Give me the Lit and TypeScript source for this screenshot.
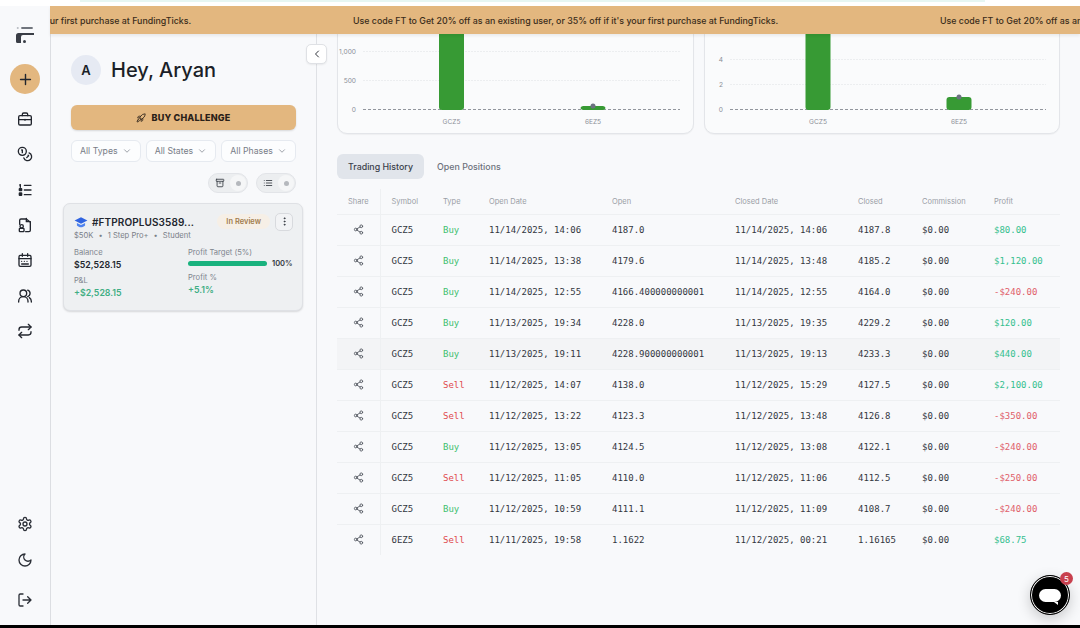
import { LitElement, html, css, svg } from "lit";
import { customElement } from "lit/decorators.js";

type Row = [string, string, string, string, string, string, string];
const rows: Row[] = [
  ["GCZ5","Buy","11/14/2025, 14:06","4187.0","11/14/2025, 14:06","4187.8","$80.00"],
  ["GCZ5","Buy","11/14/2025, 13:38","4179.6","11/14/2025, 13:48","4185.2","$1,120.00"],
  ["GCZ5","Buy","11/14/2025, 12:55","4166.400000000001","11/14/2025, 12:55","4164.0","-$240.00"],
  ["GCZ5","Buy","11/13/2025, 19:34","4228.0","11/13/2025, 19:35","4229.2","$120.00"],
  ["GCZ5","Buy","11/13/2025, 19:11","4228.900000000001","11/13/2025, 19:13","4233.3","$440.00"],
  ["GCZ5","Sell","11/12/2025, 14:07","4138.0","11/12/2025, 15:29","4127.5","$2,100.00"],
  ["GCZ5","Sell","11/12/2025, 13:22","4123.3","11/12/2025, 13:48","4126.8","-$350.00"],
  ["GCZ5","Buy","11/12/2025, 13:05","4124.5","11/12/2025, 13:08","4122.1","-$240.00"],
  ["GCZ5","Sell","11/12/2025, 11:05","4110.0","11/12/2025, 11:06","4112.5","-$250.00"],
  ["GCZ5","Buy","11/12/2025, 10:59","4111.1","11/12/2025, 11:09","4108.7","-$240.00"],
  ["6EZ5","Sell","11/11/2025, 19:58","1.1622","11/12/2025, 00:21","1.16165","$68.75"],
];

const icon = (body: unknown, size = 16, sw = 2) => html`<svg width=${size} height=${size} viewBox="0 0 24 24" fill="none" stroke="currentColor" stroke-width=${sw} stroke-linecap="round" stroke-linejoin="round">${body}</svg>`;

const icons = {
  plus: svg`<path d="M5 12h14M12 5v14"/>`,
  brief: svg`<rect x="2.5" y="7" width="19" height="14" rx="2"/><path d="M8 7V5a2 2 0 0 1 2-2h4a2 2 0 0 1 2 2v2M2.5 13h19M12 12.5v1.5"/>`,
  coins: svg`<circle cx="8" cy="8" r="6"/><path d="M18.1 10.4A6 6 0 1 1 10.3 18M7 6h1v4"/><path d="m16.7 13.9.7.7-2.8 2.8"/>`,
  list: svg`<path d="M11 5h10M11 12h10M11 19h10"/><path d="M4 4.5 5 4v4" /><rect x="3.5" y="16.5" width="3.5" height="3.5" rx=".5" fill="currentColor"/><rect x="3.5" y="10" width="3.5" height="3" rx=".5" fill="currentColor"/>`,
  file: svg`<path d="M14 2v5h6"/><path d="M4 11V5a2 2 0 0 1 2-2h8l6 5v12a2 2 0 0 1-2 2h-5"/><circle cx="7" cy="14" r="2.5"/><rect x="3.5" y="17" width="7" height="5" rx="1"/>`,
  cal: svg`<rect x="3" y="5" width="18" height="16.5" rx="2"/><path d="M8 2.5v4M16 2.5v4M3 10h18M7 14h.01M11 14h.01M15 14h.01M7 18h10"/>`,
  users: svg`<circle cx="9.5" cy="8" r="5"/><path d="M2.5 21v-1a7 7 0 0 1 14 0v1M16 3.2a5 5 0 0 1 0 9.6M21.5 21v-1a7 7 0 0 0-3-5.5"/>`,
  repeat: svg`<path d="m17 2 4 4-4 4"/><path d="M3 11v-1a4 4 0 0 1 4-4h14M7 22l-4-4 4-4"/><path d="M21 13v1a4 4 0 0 1-4 4H3"/>`,
  gear: svg`<path d="M12.2 2h-.4a2 2 0 0 0-2 2v.2a2 2 0 0 1-1 1.7l-.4.3a2 2 0 0 1-2 0l-.2-.1a2 2 0 0 0-2.7.7l-.2.4a2 2 0 0 0 .7 2.7l.2.1a2 2 0 0 1 1 1.7v.5a2 2 0 0 1-1 1.8l-.2.1a2 2 0 0 0-.7 2.7l.2.4a2 2 0 0 0 2.7.7l.2-.1a2 2 0 0 1 2 0l.4.3a2 2 0 0 1 1 1.7v.2a2 2 0 0 0 2 2h.4a2 2 0 0 0 2-2v-.2a2 2 0 0 1 1-1.7l.4-.3a2 2 0 0 1 2 0l.2.1a2 2 0 0 0 2.7-.7l.2-.4a2 2 0 0 0-.7-2.7l-.2-.1a2 2 0 0 1-1-1.8v-.5a2 2 0 0 1 1-1.7l.2-.1a2 2 0 0 0 .7-2.7l-.2-.4a2 2 0 0 0-2.7-.7l-.2.1a2 2 0 0 1-2 0l-.4-.3a2 2 0 0 1-1-1.7V4a2 2 0 0 0-2-2z"/><circle cx="12" cy="12" r="3"/>`,
  moon: svg`<path d="M12 3a6 6 0 0 0 9 9 9 9 0 1 1-9-9z"/>`,
  logout: svg`<path d="M9 21H5a2 2 0 0 1-2-2V5a2 2 0 0 1 2-2h4M16 17l5-5-5-5M21 12H9"/>`,
  rocket: svg`<path d="M4.5 16.5c-1.5 1.3-2 5-2 5s3.7-.5 5-2c.7-.8.7-2.1-.1-2.900a2.2 2.2 0 0 0-2.900-.1z"/><path d="m12 15-3-3a22 22 0 0 1 2-3.900A12.900 12.900 0 0 1 22 2c0 2.700-.8 7.500-6 11a22.400 22.400 0 0 1-4 2z"/><path d="M9 12H4s.6-3 2-4c1.600-1.100 5 0 5 0M12 15v5s3-.6 4-2c1.100-1.600 0-5 0-5"/>`,
  chev: svg`<path d="m6 9 6 6 6-6"/>`,
  left: svg`<path d="m15 18-6-6 6-6"/>`,
  archive: svg`<rect x="3" y="3" width="18" height="5" rx="1"/><path d="M5 8v11a2 2 0 0 0 2 2h10a2 2 0 0 0 2-2V8M10 12h4"/>`,
  lines: svg`<path d="M8 6h13M8 12h13M8 18h13M3 6h.01M3 12h.01M3 18h.01"/>`,
  dots: svg`<circle cx="12" cy="5" r="1"/><circle cx="12" cy="12" r="1"/><circle cx="12" cy="19" r="1"/>`,
  share: svg`<circle cx="18" cy="5" r="3"/><circle cx="6" cy="12" r="3"/><circle cx="18" cy="19" r="3"/><path d="m8.600 13.500 6.800 4M15.400 6.500l-6.800 4"/>`,
};

const MSG = "Use code FT to Get 20% off as an existing user, or 35% off if it's your first purchase at FundingTicks.";

function chart(ticks: [number, string][], bars: [number, number][], w: number, ox: number) {
  // bars: [x-centre, top-y], coordinates local to the card
  const base = 90;
  return html`<svg class="plot" width=${w} height="114" viewBox="0 0 ${w} 114">
    ${ticks.map(([y, t]) => svg`
      <text x=${ox - 7} y=${y + 2.5} text-anchor="end" class="tick">${t}</text>
      <line x1=${ox} x2=${w - 13} y1=${y + 0.5} y2=${y + 0.5} stroke=${y === base ? "#92969d" : "#eceef0"} stroke-width="1" stroke-dasharray=${y === base ? "3 2" : "2 1"}/>
    `)}
    ${bars.map(([x, top], i) => svg`
      <path d="M${x - 12.5} ${base - 2}V${top + 3}a3 3 0 0 1 3-3h19a3 3 0 0 1 3 3V${base - 2}a3 3 0 0 1-3 3h-19a3 3 0 0 1-3-3z" fill="#379a34"/>
      ${i === 1 ? svg`<circle cx=${x} cy=${top} r="2.5" fill="#6b7280"/>` : null}
      <text x=${x} y="104.5" text-anchor="middle" class="tick">${i === 0 ? "GCZ5" : "6EZ5"}</text>
    `)}
  </svg>`;
}

@customElement("app-root")
export class AppRoot extends LitElement {
  static styles = css`
    :host { display: block; width: 1080px; height: 628px; overflow: hidden; position: relative; background: #f8f9fb; font-family: Inter, "Liberation Sans", sans-serif; color: #1b1f27; }
    .top { height: 6px; background: #fff; display: flex; }
    .top i { display: block; margin-left: 80px; width: 905px; height: 2px; background: #e6f6f3; }
    .shell { display: grid; grid-template-columns: 51px 266px 1fr; height: 619px; }
    .black { height: 3px; background: #000; }
    .side { border-right: 1px solid #dcdee2; display: flex; flex-direction: column; align-items: center; color: #22262e; padding-top: 19px; }
    .logo { height: 22px; margin-bottom: 17px; }
    .plus { width: 30px; height: 30px; border-radius: 50%; background: #e3b77f; display: flex; align-items: center; justify-content: center; color: #22262e; margin-bottom: 17px; }
    .nav { display: flex; flex-direction: column; gap: 19.35px; }
    .nav svg, .bot svg { display: block; }
    .bot { margin-top: auto; display: flex; flex-direction: column; gap: 20px; padding-bottom: 17px; color: #2b2f37; }
    .bot svg:last-child { margin-top: 4px; }
    .panel { border-right: 1px solid #dfe1e5; padding: 49px 12px 0; display: flex; flex-direction: column; position: relative; }
    .hello { display: flex; align-items: center; gap: 10px; padding-left: 8px; margin-bottom: 20px; }
    .ava { width: 30px; height: 30px; border-radius: 50%; background: #e6eaf3; display: flex; align-items: center; justify-content: center; font-size: 13px; font-weight: 600; }
    .hello h1 { margin: 0; font-size: 20px; font-weight: 500; color: #1b1f27; line-height: 30px; }
    .buy { margin: 0 8px; height: 25px; border-radius: 6px; background: #e3b77f; display: flex; align-items: center; justify-content: center; gap: 5px; font-size: 9px; font-weight: 800; letter-spacing: .2px; color: #2a2118; box-shadow: 0 1px 2px #0002; }
    .filters { display: flex; gap: 5px; margin: 10px 8px 0; }
    .sel { flex: 1 1 auto; height: 22px; box-sizing: border-box; border: 1px solid #e6eaf0; border-radius: 6px; background: #fcfdfe; display: flex; align-items: center; justify-content: space-between; padding: 0 8px; font-size: 8.7px; color: #777c86; white-space: nowrap; }
    .sel svg { color: #8b9099; }
    .toggles { display: flex; justify-content: flex-end; gap: 8px; margin: 11px 8px 0; }
    .tog { width: 40px; height: 20px; box-sizing: border-box; border-radius: 10px; background: #eceef0; border: 1px solid #e2e4e8; display: flex; align-items: center; justify-content: space-between; padding: 0 1px 0 6px; color: #33373f; }
    .tog b { width: 16px; height: 16px; border-radius: 50%; background: #f5f6f7; display: flex; align-items: center; justify-content: center; }
    .tog b::after { content: ""; width: 5px; height: 5px; border-radius: 50%; background: #b5b8bd; }
    .card { margin-top: 10px; box-sizing: border-box; width: 240px; height: 108px; background: #eef0f2; border: 1px solid #dfe1e5; border-radius: 7px; box-shadow: 0 1px 2px #0002; padding: 9px 9px 0 10px; }
    .chead { display: flex; align-items: center; height: 17px; }
    .chead .name { font-size: 10px; font-weight: 600; margin-left: 4px; letter-spacing: .1px; flex: 1; white-space: nowrap; color: #22262e; }
    .badge { font-size: 7.5px; font-weight: 600; color: #a27c4c; background: #f6efe6; border-radius: 8px; padding: 3px 9px; margin-right: 5px; }
    .more { width: 18px; height: 18px; box-sizing: border-box; border: 1px solid #d8dade; border-radius: 5px; display: flex; align-items: center; justify-content: center; color: #30343c; background: #f2f3f5; }
    .meta { font-size: 7.6px; color: #7a7f88; margin-top: 1px; margin-bottom: 8px; display: flex; gap: 5px; }
    .cols { display: grid; grid-template-columns: 114px 1fr; }
    .lab { font-size: 7.6px; color: #80858e; line-height: 10px; }
    .val { font-size: 8.8px; font-weight: 600; color: #22262e; line-height: 11px; margin-top: 1px; margin-bottom: 6px; }
    .pos { color: #3fae84; }
    .prog { display: flex; align-items: center; gap: 5px; height: 10px; margin-bottom: 5px; font-size: 7.5px; font-weight: 600; color: #33373f; white-space: nowrap; }
    .bar { width: 79px; height: 5px; border-radius: 3px; background: #19b27e; }
    .collapse { position: absolute; left: 255px; top: 38px; width: 21px; height: 20px; box-sizing: border-box; border: 1px solid #dfe1e5; background: #fff; border-radius: 5px; display: flex; align-items: center; justify-content: center; color: #30343c; box-shadow: 0 1px 2px #0001; z-index: 3; }
    .main { padding: 0 20px; display: flex; flex-direction: column; min-width: 0; }
    .charts { display: grid; grid-template-columns: 356.5px 356.5px; gap: 10px; }
    .ccard { height: 128px; box-sizing: border-box; border: 1px solid #e3e5e9; border-radius: 10px; background: #fafbfc; box-shadow: 0 1px 1px #0000000a; position: relative; overflow: hidden; }
    .plot { position: absolute; left: 0; bottom: 0; display: block; }
    .tick { font-size: 6.6px; fill: #8b8f97; font-family: Inter, sans-serif; }
    .tabs { display: flex; gap: 2px; margin-top: 20px; margin-bottom: 10px; height: 25px; }
    .tab { padding: 0 11px; display: flex; align-items: center; font-size: 8.85px; font-weight: 500; color: #6d727c; border-radius: 6px; }
    .tab.on { background: #e1e5eb; color: #3a404a; }
    table { border-collapse: collapse; table-layout: fixed; width: 723px; }
    th { height: 25px; padding: 0 0 0 11px; text-align: left; font-size: 7.5px; font-weight: 400; color: #9a9ea6; box-sizing: border-box; }
    td { height: 31px; padding: 0 0 0 11px; font: 9px "DejaVu Sans Mono", monospace; color: #33373f; border-top: 1px solid #eef0f2; box-sizing: border-box; white-space: nowrap; }
    th:first-child, td:first-child { padding: 0; text-align: center; border-right: 1px solid #eef0f2; }
    td:first-child { color: #555a63; }
    td:first-child svg { display: block; margin: 0 auto; }
    tr.hov td { background: #f3f4f6; }
    .buyc { color: #3fc06f; }
    .sellc { color: #e0484c; }
    .win { color: #35c08f; }
    .loss { color: #e0606a; }
    .marquee { position: absolute; left: 50px; top: 6px; right: 0; height: 28px; background: #e3b77f; display: flex; align-items: center; overflow: hidden; z-index: 2; box-shadow: 0 2px 3px #0001; font-size: 8.85px; font-weight: 500; color: #3a2c1a; white-space: nowrap; }
    .mtext { flex: none; width: 587px; }
    .track { display: flex; margin-left: -284px; }
    .chat { position: absolute; left: 1030px; top: 575px; width: 40px; height: 40px; box-sizing: border-box; border-radius: 50%; background: #000; border: 1px solid #000; box-shadow: inset 0 0 0 1px #fff, 0 4px 14px #0003; display: flex; align-items: center; justify-content: center; z-index: 4; }
    .chat i { width: 22px; height: 13px; border-radius: 7px; background: #fff; display: block; position: relative; }
    .chat i::after { content: ""; position: absolute; right: 3px; bottom: -3px; border-left: 4px solid transparent; border-top: 3px solid #fff; }
    .dot { position: absolute; left: 1060px; top: 572px; width: 13px; height: 13px; border-radius: 50%; background: #c8404e; color: #fff; font-size: 8px; display: flex; align-items: center; justify-content: center; z-index: 5; }
  `;

  render() {
    return html`
      <div class="top"><i></i></div>
      <div class="shell">
        <aside class="side">
          <svg class="logo" width="20" height="22" viewBox="0 0 20 22" fill="none"><path d="M2.5 3h.5" stroke="#a4a9b0" stroke-width="1.500" stroke-linecap="round"/><path d="M7 3h10" stroke="#70757d" stroke-width="1.800" stroke-linecap="round"/><path d="M1 10.500Q1 8 3.500 8H19v2H8Q6 10 6 12v6H2.500Q1 18 1 16.500z" fill="#3a3e46"/><circle cx="9.500" cy="16.500" r="1.500" fill="#3a3e46"/></svg>
          <div class="plus">${icon(icons.plus, 17)}</div>
          <nav class="nav">
            ${[icons.brief, icons.coins, icons.list, icons.file, icons.cal, icons.users, icons.repeat].map((i) => icon(i))}
          </nav>
          <div class="bot">${[icons.gear, icons.moon, icons.logout].map((i) => icon(i))}</div>
        </aside>
        <section class="panel">
          <div class="hello"><div class="ava">A</div><h1>Hey, Aryan</h1></div>
          <div class="buy">${icon(icons.rocket, 10)}<span>BUY CHALLENGE</span></div>
          <div class="filters">
            ${["All Types", "All States", "All Phases"].map((t) => html`<div class="sel"><span>${t}</span>${icon(icons.chev, 10)}</div>`)}
          </div>
          <div class="toggles">
            <div class="tog">${icon(icons.archive, 10)}<b></b></div>
            <div class="tog">${icon(icons.lines, 10)}<b></b></div>
          </div>
          <article class="card">
            <div class="chead">
              <svg width="14" height="12" viewBox="0 0 24 20"><path d="M12 2 1 7.500l11 5.500 11-5.500z" fill="#2f63e0"/><path d="M5 11.500v4.500c2 2 4.500 3 7 3s5-1 7-3v-4.500l-7 3.500z" fill="#4f83ef"/></svg>
              <span class="name">#FTPROPLUS3589...</span>
              <span class="badge">In Review</span>
              <span class="more">${icon(icons.dots, 11)}</span>
            </div>
            <div class="meta"><span>$50K</span><span>•</span><span>1 Step Pro+</span><span>•</span><span>Student</span></div>
            <div class="cols">
              <div>
                <div class="lab">Balance</div><div class="val">$52,528.15</div>
                <div class="lab">P&amp;L</div><div class="val pos">+$2,528.15</div>
              </div>
              <div>
                <div class="lab">Profit Target (5%)</div>
                <div class="prog"><div class="bar"></div>100%</div>
                <div class="lab">Profit %</div><div class="val pos">+5.1%</div>
              </div>
            </div>
          </article>
          <div class="collapse">${icon(icons.left, 12)}</div>
        </section>
        <main class="main">
          <div class="charts">
            <div class="ccard">${chart([[32, "1,000"], [61, "500"], [90, "0"]], [[113.5, 0], [255, 87]], 355, 25)}</div>
            <div class="ccard">${chart([[40, "4"], [65, "2"], [90, "0"]], [[113, 0], [254, 78]], 354, 25)}</div>
          </div>
          <div class="tabs"><div class="tab on">Trading History</div><div class="tab">Open Positions</div></div>
          <table>
            <colgroup><col style="width:43px"/><col style="width:52px"/><col style="width:46px"/><col style="width:123px"/><col style="width:123px"/><col style="width:123px"/><col style="width:64px"/><col style="width:72px"/><col style="width:77px"/></colgroup>
            <thead><tr>${["Share","Symbol","Type","Open Date","Open","Closed Date","Closed","Commission","Profit"].map((h) => html`<th>${h}</th>`)}</tr></thead>
            <tbody>
              ${rows.map((r, i) => html`<tr class=${i === 4 ? "hov" : ""}>
                <td>${icon(icons.share, 11)}</td>
                <td>${r[0]}</td>
                <td class=${r[1] === "Buy" ? "buyc" : "sellc"}>${r[1]}</td>
                <td>${r[2]}</td><td>${r[3]}</td><td>${r[4]}</td><td>${r[5]}</td><td>$0.00</td>
                <td class=${r[6].startsWith("-") ? "loss" : "win"}>${r[6]}</td>
              </tr>`)}
            </tbody>
          </table>
        </main>
      </div>
      <div class="black"></div>
      <div class="marquee"><div class="track">${[0, 1, 2].map(() => html`<span class="mtext">${MSG}</span>`)}</div></div>
      <div class="chat"><i></i></div>
      <div class="dot">5</div>
    `;
  }
}
